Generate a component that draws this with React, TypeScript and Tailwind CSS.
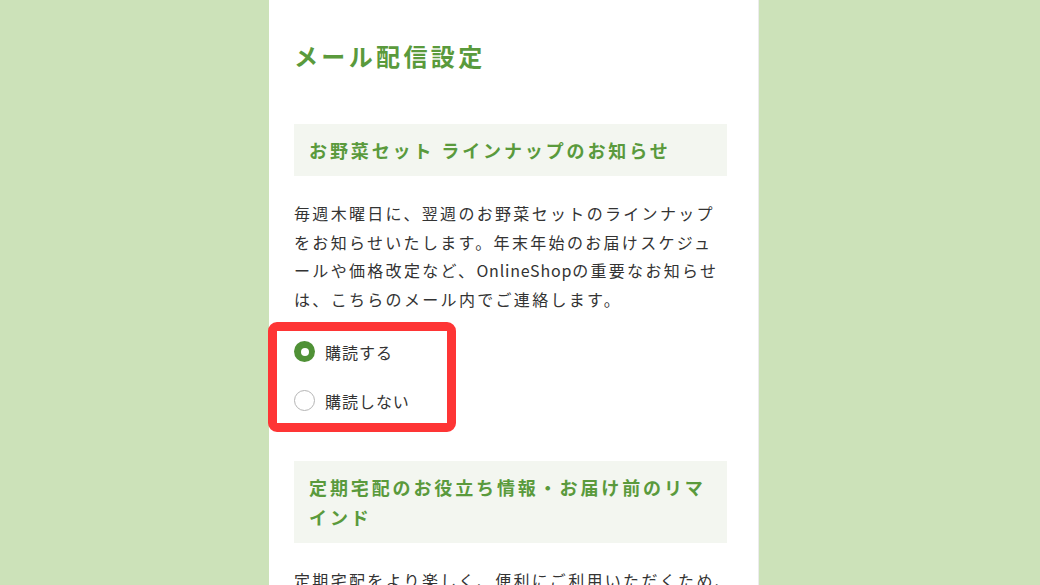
const sections = [
  {
    title: "お野菜セット ラインナップのお知らせ",
    body: (
      <>
        毎週木曜日に、翌週のお野菜セットのラインナップをお知らせいたします。年末年始のお届けスケジュールや価格改定など、
        <span className="tracking-[0.05em]">OnlineShop</span>
        の重要なお知らせは、こちらのメール内でご連絡します。
      </>
    ),
    radios: true,
  },
  {
    title: "定期宅配のお役立ち情報・お届け前のリマインド",
    body: "定期宅配をより楽しく、便利にご利用いただくため、お役立ち情報やお届け前のリマインドをお送りします。",
    radios: false,
  },
];

function Radio({ checked, label }: { checked: boolean; label: string }) {
  return (
    <label className="flex h-[49px] items-center gap-[10px]">
      {checked ? (
        <span className="flex h-[21px] w-[21px] items-center justify-center rounded-full bg-[#4f9136]">
          <span className="h-[8px] w-[8px] rounded-full bg-white" />
        </span>
      ) : (
        <span className="h-[21px] w-[21px] rounded-full border-[1.5px] border-[#b5b5b5] bg-white" />
      )}
      <span className="text-[16px] tracking-[0.06em] text-[#333]">{label}</span>
    </label>
  );
}

export default function App() {
  return (
    <div
      className="flex h-[585px] w-full overflow-hidden bg-[#cce2b9] pl-[269px]"
      style={{ fontFamily: '"Noto Sans CJK JP", "Noto Sans", sans-serif' }}
    >
      <div className="relative h-full w-[490px] shrink-0 border-r border-[#ececec] bg-white pl-[25px] pr-[31px] pt-[38px]">
        <h1 className="text-[24px] font-bold leading-[36px] tracking-[0.14em] text-[#5a9a3c]">メール配信設定</h1>

        {sections.map((s, i) => (
          <div key={s.title} className={i === 0 ? "mt-[50px]" : "mt-[36px]"}>
            <h2 className="bg-[#f3f6f0] px-[15px] py-[11px] text-[18px] font-bold leading-[30px] tracking-[0.16em] text-[#5a9a3c]">
              {s.title}
            </h2>
            <p
              className={
                s.radios
                  ? "mt-[23px] text-[16px] leading-[28.5px] tracking-[0.145em] text-[#333]"
                  : "mt-[23px] -mr-[16px] text-[16px] leading-[28.5px] tracking-[0.145em] text-[#333]"
              }
            >
              {s.body}
            </p>
            {s.radios && (
              <div className="mt-[14px] flex flex-col">
                <Radio checked label="購読する" />
                <Radio checked={false} label="購読しない" />
              </div>
            )}
          </div>
        ))}

        {/* annotation */}
        <div className="absolute left-[-1px] top-[322px] h-[110px] w-[188px] rounded-[9px] border-[9px] border-[#fe3535]" />
      </div>
    </div>
  );
}
